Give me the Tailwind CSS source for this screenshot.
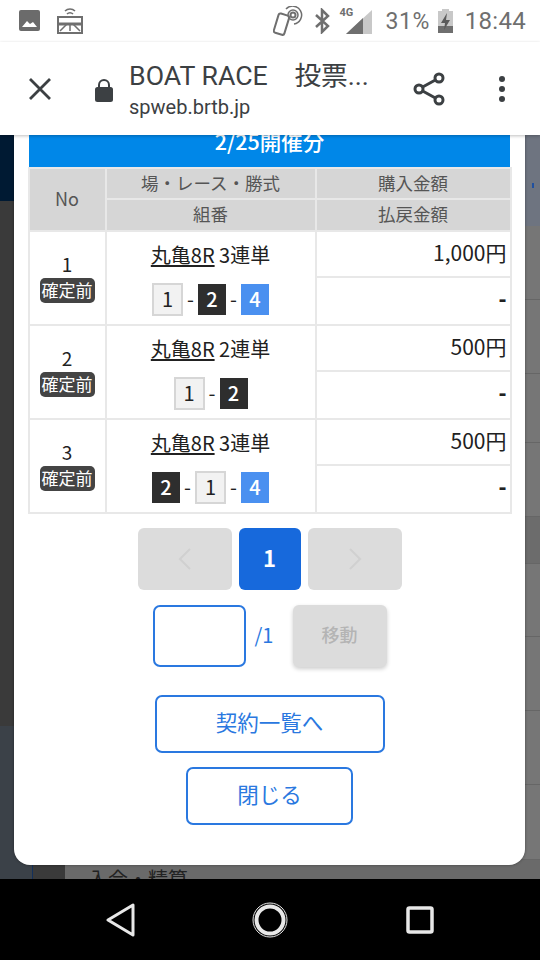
<!DOCTYPE html>
<html lang="ja">
<head>
<meta charset="utf-8">
<script src="https://cdn.jsdelivr.net/npm/@tailwindcss/browser@4"></script>
</head>
<body class="bg-black">
<div class="relative flex h-[960px] w-[540px] flex-col overflow-hidden font-['Roboto','Noto_Sans_CJK_JP',sans-serif]">
  <!-- status bar -->
  <div class="flex h-[42px] shrink-0 items-center justify-between bg-white pl-[19px] pr-[14px]">
    <div class="flex items-center gap-[17px]">
      <svg width="21" height="22" viewBox="0 0 21 22"><rect width="21" height="21" y="0" rx="2" fill="#6b6b6b"/><path d="M3 17l5-6 3 3 3-2 4 5z" fill="#fff"/></svg>
      <svg width="26" height="28" viewBox="0 0 26 28" fill="none" stroke="#6f6f6f"><path d="M8 4a7 7 0 0 1 10 0M10 7a4 4 0 0 1 6 0" stroke-width="1.500"/><rect x="1" y="10" width="24" height="16" stroke-width="2"/><path d="M2 17h22" stroke-width="3"/><path d="M3 24l7-7h6l7 7M13 18v6" stroke-width="1.500"/></svg>
    </div>
    <div class="flex items-center text-[#6f6f6f]">
      <svg width="30" height="30" viewBox="0 0 30 30" fill="none" stroke="#6f6f6f" stroke-width="2"><rect x="3" y="8" width="11" height="20" rx="2" transform="rotate(17 8 18)"/><circle cx="20" cy="9" r="2.500"/><circle cx="20" cy="9" r="5" stroke-width="1.500"/><path d="M13 3a9 9 0 1 1 8 15" stroke-width="1.500"/></svg>
      <svg class="ml-[11px]" width="16" height="26" viewBox="0 0 16 26" fill="none" stroke="#6f6f6f" stroke-width="2.500"><path d="M2 7l12 11-6 6V2l6 6L2 19"/></svg>
      <div class="relative ml-[10px] h-[26px] w-[32px]">
        <svg class="absolute bottom-0 right-0" width="26" height="24" viewBox="0 0 26 24"><path d="M26 0v24H0z" fill="#c8c8c8"/><path d="M17 8v16H0z" fill="#6f6f6f"/></svg>
        <span class="absolute left-0 top-[-2px] text-[11px] font-bold leading-[14px]">4G</span>
      </div>
      <span class="ml-[14px] text-[23px] leading-none tracking-[0.5px]">31%</span>
      <svg class="ml-[8px]" width="15" height="24" viewBox="0 0 15 24"><path d="M4 2V0h7v2h4v22H0V2z" fill="#c8c8c8"/><path d="M0 17h15v7H0z" fill="#6f6f6f"/><path d="M9 4L3 14h4l-1 7 6-10H8z" fill="#5a5a5a"/></svg>
      <span class="ml-[12px] text-[24px] leading-none tracking-[0.3px]">18:44</span>
    </div>
  </div>
  <!-- toolbar -->
  <div class="relative z-20 flex h-[93px] shrink-0 items-center bg-white shadow-[0_1px_3px_rgba(0,0,0,0.25)]">
    <svg class="ml-[29px]" width="22" height="22" viewBox="0 0 22 22" stroke="#3c4043" stroke-width="2.800" fill="none"><path d="M1 1l20 20M21 1L1 21"/></svg>
    <svg class="ml-[44px] mt-[2px]" width="18" height="24" viewBox="0 0 18 24" fill="#3c4043"><path d="M4 10V7a5 5 0 0 1 10 0v3" fill="none" stroke="#3c4043" stroke-width="2"/><rect y="9" width="18" height="15" rx="2.500"/></svg>
    <div class="ml-[16px] flex w-[260px] flex-col pt-[3px] text-[#3c4043]">
      <span class="text-[26.7px] leading-[30px] whitespace-pre">BOAT RACE　投票...</span>
      <span class="mt-[4px] text-[20px] leading-[24px]">spweb.brtb.jp</span>
    </div>
    <svg class="ml-[24px]" width="32" height="34" viewBox="0 0 32 34" fill="none" stroke="#3c4043" stroke-width="3"><path d="M6 17L26 6M6 17l20 11"/><circle cx="6" cy="17" r="4" fill="#fff"/><circle cx="26" cy="6" r="4" fill="#fff"/><circle cx="26" cy="28" r="4" fill="#fff"/></svg>
    <div class="ml-[54px] flex flex-col gap-[4px]">
      <span class="size-[6px] rounded-full bg-[#3c4043]"></span>
      <span class="size-[6px] rounded-full bg-[#3c4043]"></span>
      <span class="size-[6px] rounded-full bg-[#3c4043]"></span>
    </div>
  </div>
  <!-- page behind + dialog -->
  <div class="relative flex h-[744px] shrink-0">
    <div class="flex w-[33px] shrink-0 flex-col">
      <div class="h-[66px] bg-[#001a33]"></div>
      <div class="h-[525px] bg-[#3a3a3a]"></div>
      <div class="flex-1 border-r border-[#14305a] bg-[#3b4148]"></div>
    </div>
    <div class="w-[32px] shrink-0 bg-[#3a3a3a]"></div>
    <div class="relative flex flex-1 flex-col bg-[#767676]">
      <div class="h-[91px] bg-[#6e7480]"></div>
      <div class="h-[74px] border-b border-[#666666]"></div>
      <div class="h-[74px] border-b border-[#666666]"></div>
      <div class="h-[69px] border-b border-[#666666]"></div>
      <div class="h-[74px] border-b border-[#666666]"></div>
      <div class="h-[46px] bg-[#6c6c6c]"></div>
      <div class="h-[74px] border-y border-[#666666]"></div>
      <div class="h-[74px] border-b border-[#666666]"></div>
      <div class="h-[74px] border-b border-[#666666]"></div>
      <div class="h-[75px] border-b border-[#666666]"></div>
      <div class="flex-1 overflow-hidden bg-[#6a6a6a] pl-[23px] pt-[6px] text-[20px] leading-[28px] text-[#222222]">入会・精算</div>
    </div>
    <div class="absolute right-[6px] top-[48px] h-[5px] w-[2px] bg-[#2050a0]"></div>
    <!-- dialog -->
    <div class="absolute left-[14px] top-0 flex h-[730px] w-[511px] flex-col items-center rounded-b-[16px] bg-white px-[15px] font-['Noto_Sans_CJK_JP','Noto_Sans',sans-serif] shadow-[0_0_3px_rgba(0,0,0,0.4)]">
      <div class="h-[32px] w-full overflow-hidden bg-[#0087e8] text-center text-[21.5px] font-medium leading-[12px] text-white">2/25開催分</div>
      <table class="w-[482px] table-fixed border-collapse text-[#212121]">
        <colgroup><col class="w-[77px]"><col class="w-[210px]"><col class="w-[195px]"></colgroup>
        <thead class="text-[#555555]">
          <tr class="h-[31px]">
            <th rowspan="2" class="border-2 border-[#e8e8e8] bg-[#d6d6d6] pb-[3px] text-[18px] font-normal">No</th>
            <th class="border-2 border-[#e8e8e8] bg-[#d6d6d6] pb-[1px] text-[17.5px] font-normal">場・レース・勝式</th>
            <th class="border-2 border-[#e8e8e8] bg-[#d6d6d6] pb-[1px] text-[17.5px] font-normal">購入金額</th>
          </tr>
          <tr class="h-[32px]">
            <th class="border-2 border-[#e8e8e8] bg-[#d6d6d6] pb-[1px] text-[17.5px] font-normal">組番</th>
            <th class="border-2 border-[#e8e8e8] bg-[#d6d6d6] pb-[1px] text-[17.5px] font-normal">払戻金額</th>
          </tr>
        </thead>
        <tbody>
          <tr class="h-[46px]">
            <td rowspan="2" class="border-2 border-[#e8e8e8] text-center align-middle">
              <div class="flex flex-col items-center pb-[2px]"><span class="text-[19px] leading-[24px]">1</span><span class="mt-[2px] h-[25px] w-[55px] rounded-[5px] bg-[#444444] text-center text-[17px] leading-[24px] text-white">確定前</span></div>
            </td>
            <td rowspan="2" class="border-2 border-[#e8e8e8] text-center align-top">
              <div class="mt-[10px] text-[20px] leading-[26px]"><span class="underline underline-offset-2">丸亀8R</span> 3連単</div>
              <div class="mt-[15px] flex items-center justify-center text-[20px]">
                <span class="flex h-[33px] w-[31px] items-center justify-center border-2 border-[#d6d6d6] bg-[#f2f2f2] pb-[2px]">1</span><span class="w-[15px] pb-[2px]">-</span>
                <span class="flex h-[31px] w-[28px] items-center justify-center bg-[#2e2e2e] pb-[2px] font-medium text-white">2</span><span class="w-[15px] pb-[2px]">-</span>
                <span class="flex h-[31px] w-[28px] items-center justify-center bg-[#4a90f0] pb-[2px] font-medium text-white">4</span>
              </div>
            </td>
            <td class="border-2 border-[#e8e8e8] pb-[2px] pr-[3px] text-right text-[21px]">1,000円</td>
          </tr>
          <tr class="h-[48px]"><td class="border-2 border-[#e8e8e8] pb-[4px] pr-[3px] text-right text-[21px] font-black">-</td></tr>
          <tr class="h-[46px]">
            <td rowspan="2" class="border-2 border-[#e8e8e8] text-center align-middle">
              <div class="flex flex-col items-center pb-[2px]"><span class="text-[19px] leading-[24px]">2</span><span class="mt-[2px] h-[25px] w-[55px] rounded-[5px] bg-[#444444] text-center text-[17px] leading-[24px] text-white">確定前</span></div>
            </td>
            <td rowspan="2" class="border-2 border-[#e8e8e8] text-center align-top">
              <div class="mt-[10px] text-[20px] leading-[26px]"><span class="underline underline-offset-2">丸亀8R</span> 2連単</div>
              <div class="mt-[15px] flex items-center justify-center text-[20px]">
                <span class="flex h-[33px] w-[31px] items-center justify-center border-2 border-[#d6d6d6] bg-[#f2f2f2] pb-[2px]">1</span><span class="w-[15px] pb-[2px]">-</span>
                <span class="flex h-[31px] w-[28px] items-center justify-center bg-[#2e2e2e] pb-[2px] font-medium text-white">2</span>
              </div>
            </td>
            <td class="border-2 border-[#e8e8e8] pb-[2px] pr-[3px] text-right text-[21px]">500円</td>
          </tr>
          <tr class="h-[48px]"><td class="border-2 border-[#e8e8e8] pb-[4px] pr-[3px] text-right text-[21px] font-black">-</td></tr>
          <tr class="h-[46px]">
            <td rowspan="2" class="border-2 border-[#e8e8e8] text-center align-middle">
              <div class="flex flex-col items-center pb-[2px]"><span class="text-[19px] leading-[24px]">3</span><span class="mt-[2px] h-[25px] w-[55px] rounded-[5px] bg-[#444444] text-center text-[17px] leading-[24px] text-white">確定前</span></div>
            </td>
            <td rowspan="2" class="border-2 border-[#e8e8e8] text-center align-top">
              <div class="mt-[10px] text-[20px] leading-[26px]"><span class="underline underline-offset-2">丸亀8R</span> 3連単</div>
              <div class="mt-[15px] flex items-center justify-center text-[20px]">
                <span class="flex h-[31px] w-[28px] items-center justify-center bg-[#2e2e2e] pb-[2px] font-medium text-white">2</span><span class="w-[15px] pb-[2px]">-</span>
                <span class="flex h-[33px] w-[31px] items-center justify-center border-2 border-[#d6d6d6] bg-[#f2f2f2] pb-[2px]">1</span><span class="w-[15px] pb-[2px]">-</span>
                <span class="flex h-[31px] w-[28px] items-center justify-center bg-[#4a90f0] pb-[2px] font-medium text-white">4</span>
              </div>
            </td>
            <td class="border-2 border-[#e8e8e8] pb-[2px] pr-[3px] text-right text-[21px]">500円</td>
          </tr>
          <tr class="h-[48px]"><td class="border-2 border-[#e8e8e8] pb-[4px] pr-[3px] text-right text-[21px] font-black">-</td></tr>
        </tbody>
      </table>
      <!-- pager -->
      <div class="mt-[14px] flex gap-[7px]">
        <div class="flex h-[62px] w-[94px] items-center justify-center rounded-[6px] bg-[#dcdcdc]"><svg width="14" height="22" viewBox="0 0 14 22" fill="none" stroke="#d0d0d0" stroke-width="2"><path d="M12 1L2 11l10 10"/></svg></div>
        <div class="flex h-[62px] w-[62px] items-center justify-center rounded-[6px] bg-[#1769dc] pb-[4px] text-[22px] font-bold text-white">1</div>
        <div class="flex h-[62px] w-[94px] items-center justify-center rounded-[6px] bg-[#dcdcdc]"><svg width="14" height="22" viewBox="0 0 14 22" fill="none" stroke="#d0d0d0" stroke-width="2"><path d="M2 1l10 10L2 21"/></svg></div>
      </div>
      <div class="mt-[15px] flex items-center">
        <div class="h-[62px] w-[93px] rounded-[7px] border-2 border-[#2a78e0]"></div>
        <span class="ml-[9px] w-[38px] pb-[3px] text-[20px] text-[#2a78e0]">/1</span>
        <div class="flex h-[62px] w-[94px] items-center justify-center rounded-[6px] bg-[#dcdcdc] pb-[3px] text-[18px] font-medium text-[#b4b4b4] shadow-[0_2px_4px_rgba(0,0,0,0.2)]">移動</div>
      </div>
      <button class="mt-[28px] h-[58px] w-[230px] rounded-[7px] border-2 border-[#2a78e0] pb-[3px] text-[21.5px] text-[#2a78e0]">契約一覧へ</button>
      <button class="mt-[14px] h-[58px] w-[167px] rounded-[7px] border-2 border-[#2a78e0] pb-[3px] text-[21.5px] text-[#2a78e0]">閉じる</button>
    </div>
  </div>
  <!-- nav bar -->
  <div class="flex flex-1 items-center justify-center bg-black">
    <svg class="mr-[116px]" width="30" height="34" viewBox="0 0 30 34" fill="none" stroke="#e8e8e8" stroke-width="3" stroke-linejoin="round"><path d="M27 2v30L2 17z"/></svg>
    <svg width="36" height="38" viewBox="0 0 36 38" fill="none" stroke="#e8e8e8"><circle cx="18" cy="19" r="13.500" stroke-width="4"/><circle cx="18" cy="19" r="17" stroke-width="1"/></svg>
    <svg class="ml-[118px]" width="28" height="28" viewBox="0 0 28 28" fill="none" stroke="#e8e8e8" stroke-width="3.500"><rect x="2" y="2" width="24" height="24" rx="1.500"/></svg>
  </div>
</div>
</body>
</html>
